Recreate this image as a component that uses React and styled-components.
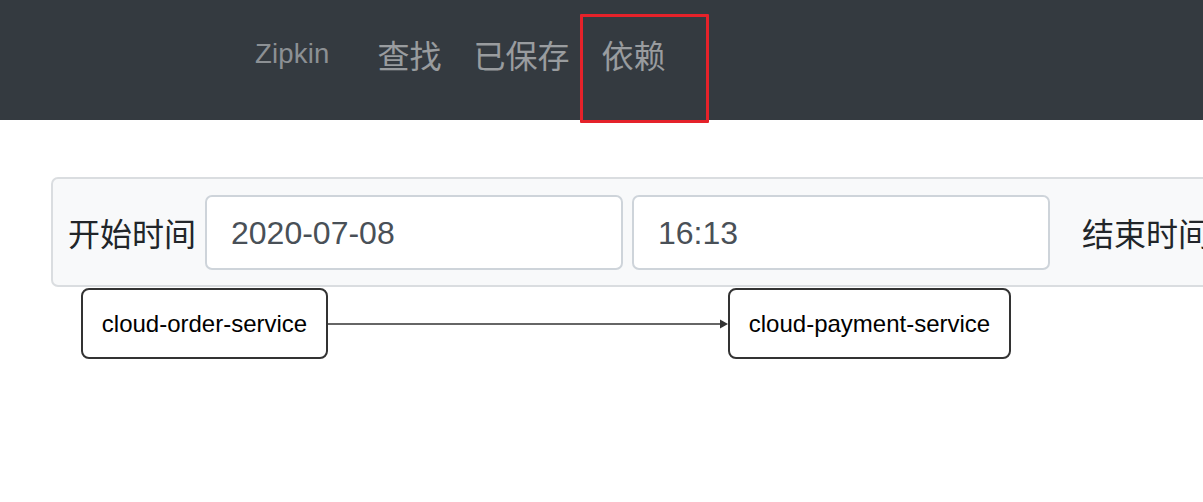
import React from 'react';
import styled, { createGlobalStyle } from 'styled-components';

const GlobalStyle = createGlobalStyle`
  html, body {
    margin: 0;
    padding: 0;
    background: #ffffff;
    overflow: hidden;
  }
  body {
    font-family: "Liberation Sans", "Noto Sans CJK SC", sans-serif;
    width: 1203px;
    height: 502px;
  }
`;

const NavBar = styled.nav`
  height: 120px;
  background: #343a40;
  display: flex;
  align-items: center;
  padding-left: 255px;
  box-sizing: border-box;
`;

const Brand = styled.div`
  font-size: 27.5px;
  color: #8c9094;
  margin-right: 32px;
  margin-top: -12px;
  letter-spacing: 0.2px;
`;

const NavLink = styled.div`
  position: relative;
  font-size: 32px;
  font-family: "Noto Sans CJK SC", sans-serif;
  color: rgba(255, 255, 255, 0.5);
  padding: 0 16px;
  margin-top: -13px;
  line-height: 1;
`;

// red box drawn over the active link (annotation)
const Highlight = styled.span`
  position: absolute;
  left: -6px;
  top: -24px;
  width: 129px;
  height: 109px;
  border: 3px solid #e5222a;
  box-sizing: border-box;
  border-radius: 1px;
`;

const Main = styled.div`
  padding: 57px 0 0 51px;
`;

const FilterPanel = styled.div`
  width: 1400px;
  height: 110px;
  box-sizing: border-box;
  background: #f8f9fa;
  border: 2px solid #dadde0;
  border-radius: 7px;
  display: flex;
  align-items: center;
  padding: 0 15px;
`;

const Label = styled.label`
  font-size: 32px;
  font-family: "Noto Sans CJK SC", sans-serif;
  color: #212529;
  margin-right: ${({ $mr }) => $mr || 9}px;
  margin-left: ${({ $ml }) => $ml || 0}px;
  white-space: nowrap;
`;

const Input = styled.div`
  width: 418px;
  height: 75px;
  box-sizing: border-box;
  background: #ffffff;
  border: 2px solid #ced4da;
  border-radius: 7px;
  display: flex;
  align-items: center;
  padding: 3px 24px 0;
  font-size: 32px;
  color: #495057;
  margin-right: 9px;
  flex-shrink: 0;
`;

const Graph = styled.div`
  position: relative;
  height: 200px;
`;

const Node = styled.div`
  position: absolute;
  top: 1px;
  left: ${({ $x }) => $x}px;
  width: ${({ $w }) => $w}px;
  height: 71px;
  box-sizing: border-box;
  border: 2px solid #333333;
  border-radius: 8px;
  background: #ffffff;
  display: flex;
  align-items: center;
  justify-content: center;
  font-size: 24px;
  color: #000000;
`;

const Edges = styled.svg`
  position: absolute;
  left: 0;
  top: 0;
`;

export default function App() {
  return (
    <>
      <GlobalStyle />
      <NavBar>
        <Brand>Zipkin</Brand>
        <NavLink>查找</NavLink>
        <NavLink>已保存</NavLink>
        <NavLink>
          依赖
          <Highlight />
        </NavLink>
      </NavBar>
      <Main>
        <FilterPanel>
          <Label>开始时间</Label>
          <Input>2020-07-08</Input>
          <Input>16:13</Input>
          <Label $ml={23}>结束时间</Label>
        </FilterPanel>
        <Graph>
          <Edges width="760" height="80">
            <line x1="277" y1="37" x2="671" y2="37" stroke="#333" strokeWidth="1.5" />
            <polygon points="669,32.5 677,37 669,41.5" fill="#333" />
          </Edges>
          <Node $x={30} $w={247}>cloud-order-service</Node>
          <Node $x={677} $w={283}>cloud-payment-service</Node>
        </Graph>
      </Main>
    </>
  );
}
